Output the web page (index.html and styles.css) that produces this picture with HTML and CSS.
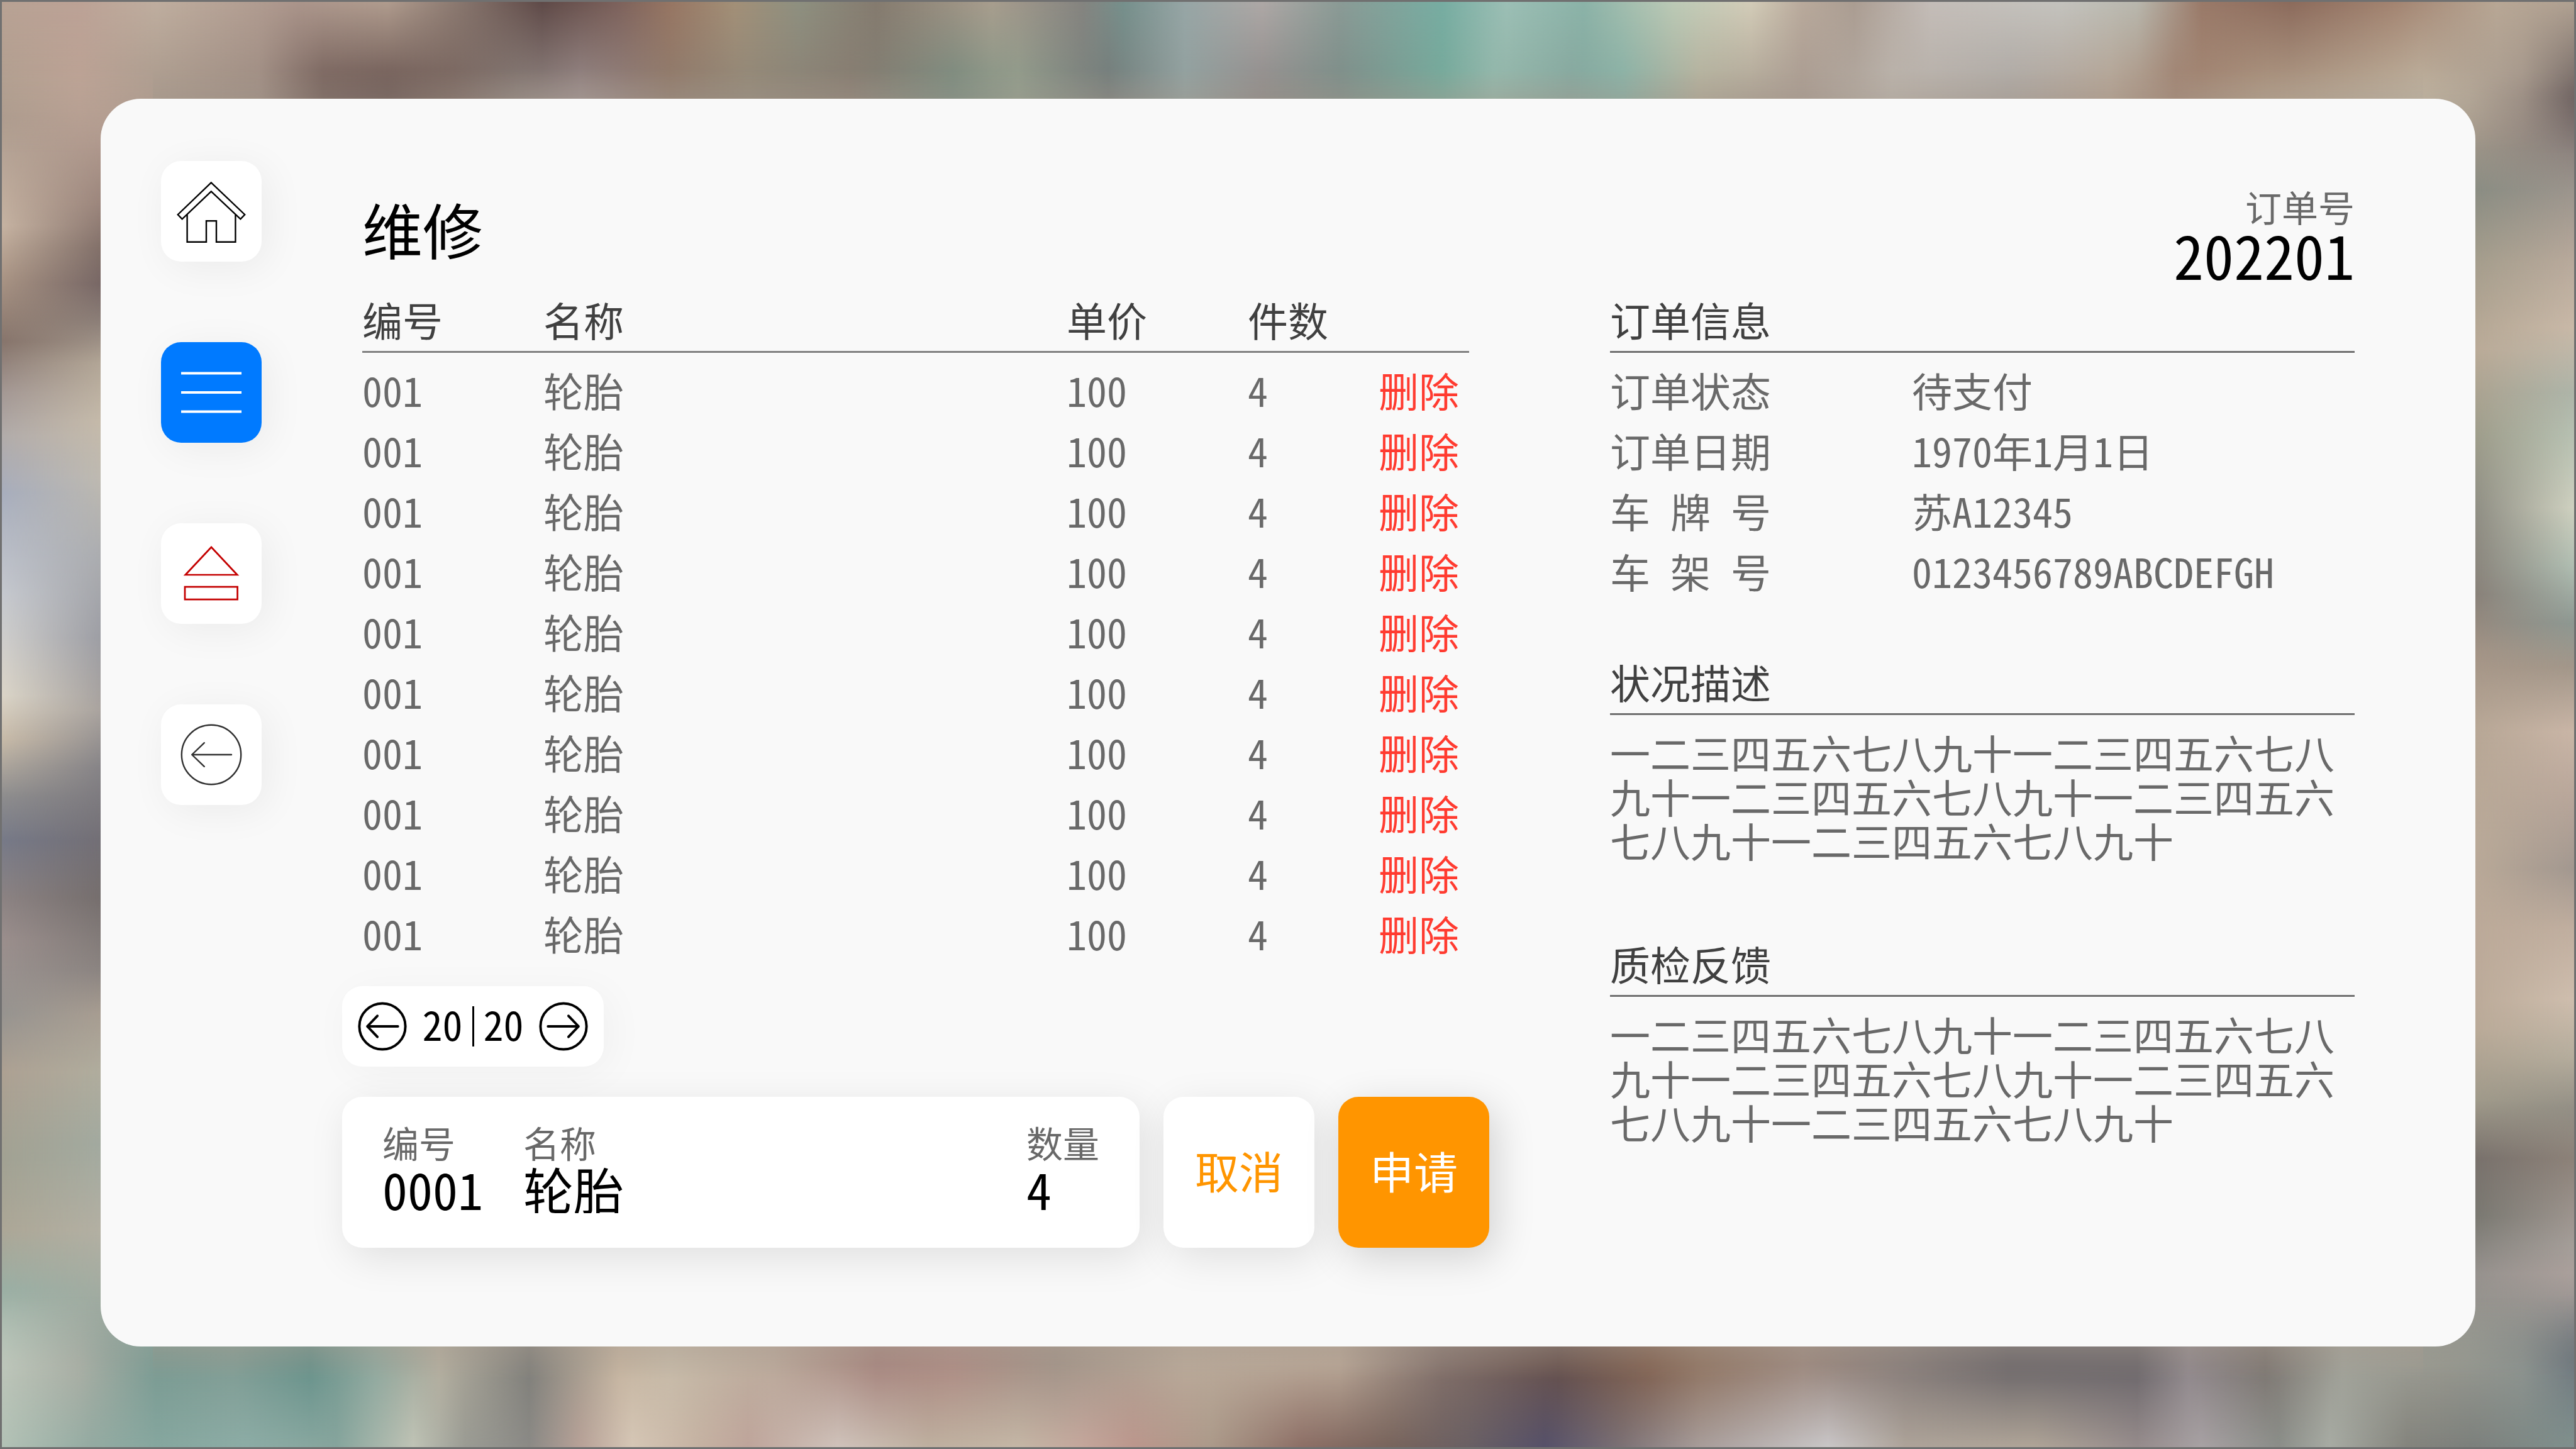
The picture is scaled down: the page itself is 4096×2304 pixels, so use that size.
FILE: index.html
```html
<!DOCTYPE html>
<html lang="zh-CN">
<head>
<meta charset="utf-8">
<title>维修</title>
<link rel="stylesheet" href="styles.css">
</head>
<body>
<div class="page">
  <div class="backdrop" aria-hidden="true">
    <div class="strip strip-left"></div>
    <div class="strip strip-right"></div>
    <div class="strip strip-top"></div>
    <div class="strip strip-bottom"></div>
  </div>

  <div class="panel">
    <nav class="nav" aria-label="导航">
      <a class="nav-item" href="#home" aria-label="首页">
        <svg viewBox="0 0 200 200"><path d="M99.700 43 L33.500 106.500 L42 115.500 L99.700 60.500 L158 115.500 L166.500 106.500 Z M52 106.500 V161 H90 V119 H110 V161 H148 V106.500"/></svg>
      </a>
      <a class="nav-item nav-item-active" href="#list" aria-label="列表">
        <svg viewBox="0 0 200 200"><path d="M40 62 H160 M40 100 H160 M40 138 H160"/></svg>
      </a>
      <a class="nav-item nav-item-eject" href="#eject" aria-label="弹出">
        <svg viewBox="0 0 200 200"><path d="M100 47.500 L48.500 102.500 H151.500 Z M47.500 126.500 H152 V151.500 H47.500 Z"/></svg>
      </a>
      <a class="nav-item nav-item-back" href="#back" aria-label="返回">
        <svg viewBox="0 0 200 200"><circle cx="100" cy="100" r="59"/><path d="M61.500 100 H140 M86 76.500 L61.500 100 L86 123.500"/></svg>
      </a>
    </nav>

    <main class="main">
      <h1 class="title">维修</h1>
      <table class="parts">
        <colgroup><col class="col-id"><col><col class="col-price"><col class="col-count"><col class="col-action"></colgroup>
        <thead>
          <tr><th>编号</th><th>名称</th><th>单价</th><th>件数</th><td></td></tr>
        </thead>
        <tbody>
          <tr><td>001</td><td>轮胎</td><td>100</td><td>4</td><td><button class="delete" type="button">删除</button></td></tr>
          <tr><td>001</td><td>轮胎</td><td>100</td><td>4</td><td><button class="delete" type="button">删除</button></td></tr>
          <tr><td>001</td><td>轮胎</td><td>100</td><td>4</td><td><button class="delete" type="button">删除</button></td></tr>
          <tr><td>001</td><td>轮胎</td><td>100</td><td>4</td><td><button class="delete" type="button">删除</button></td></tr>
          <tr><td>001</td><td>轮胎</td><td>100</td><td>4</td><td><button class="delete" type="button">删除</button></td></tr>
          <tr><td>001</td><td>轮胎</td><td>100</td><td>4</td><td><button class="delete" type="button">删除</button></td></tr>
          <tr><td>001</td><td>轮胎</td><td>100</td><td>4</td><td><button class="delete" type="button">删除</button></td></tr>
          <tr><td>001</td><td>轮胎</td><td>100</td><td>4</td><td><button class="delete" type="button">删除</button></td></tr>
          <tr><td>001</td><td>轮胎</td><td>100</td><td>4</td><td><button class="delete" type="button">删除</button></td></tr>
          <tr><td>001</td><td>轮胎</td><td>100</td><td>4</td><td><button class="delete" type="button">删除</button></td></tr>
        </tbody>
      </table>

      <div class="pager">
        <button class="pager-button" type="button" aria-label="上一页">
          <svg viewBox="0 0 98 98"><circle cx="49" cy="49" r="46"/><path d="M19 49 H80 M39 28 L19 49 L39 70"/></svg>
        </button>
        <span class="pager-pages"><span class="pager-number">20</span><span class="pager-bar"></span><span class="pager-number">20</span></span>
        <button class="pager-button" type="button" aria-label="下一页">
          <svg viewBox="0 0 98 98"><circle cx="49" cy="49" r="46"/><path d="M18 49 H79 M59 28 L79 49 L59 70"/></svg>
        </button>
      </div>

      <form class="entry">
        <div class="card">
          <div class="field field-id"><label for="part-id">编号</label><input id="part-id" type="text" value="0001"></div>
          <div class="field field-name"><label for="part-name">名称</label><input id="part-name" type="text" value="轮胎"></div>
          <div class="field field-count"><label for="part-count">数量</label><input id="part-count" type="text" value="4"></div>
        </div>
        <button class="action action-cancel" type="button">取消</button>
        <button class="action action-apply" type="button">申请</button>
      </form>
    </main>

    <aside class="side">
      <div class="order">
        <span class="order-label">订单号</span>
        <strong class="order-number">202201</strong>
      </div>
      <section class="block">
        <h2>订单信息</h2>
        <dl class="info">
          <dt>订单状态</dt><dd>待支付</dd>
          <dt>订单日期</dt><dd>1970年1月1日</dd>
          <dt>车 牌 号</dt><dd>苏A12345</dd>
          <dt>车 架 号</dt><dd>0123456789ABCDEFGH</dd>
        </dl>
      </section>
      <section class="block block-status">
        <h2>状况描述</h2>
        <p>一二三四五六七八九十一二三四五六七八九十一二三四五六七八九十一二三四五六七八九十一二三四五六七八九十</p>
      </section>
      <section class="block block-check">
        <h2>质检反馈</h2>
        <p>一二三四五六七八九十一二三四五六七八九十一二三四五六七八九十一二三四五六七八九十一二三四五六七八九十</p>
      </section>
    </aside>
  </div>
</div>
</body>
</html>
```
FILE: styles.css
```css
* { box-sizing: border-box; }

body {
  margin: 0;
  font-family: "Noto Sans CJK SC", sans-serif;
  font-feature-settings: "hwid";
  font-size: 64px;
  line-height: 96px;
  color: #696969;
}

h1, h2, p, dl, dd { margin: 0; font-weight: 400; }

button, input {
  margin: 0;
  padding: 0;
  border: 0;
  background: none;
  font: inherit;
  font-feature-settings: inherit;
  color: inherit;
}

svg { display: block; width: 100%; fill: none; stroke: currentColor; }

.page {
  position: relative;
  min-height: 100vh;
  padding: 154px 157px 160px;
  border: 3px solid #707070;
}

/* Blurred photo backdrop, visible round the panel */
.backdrop { position: absolute; inset: 0; overflow: hidden; background: #a89c90; }
.strip { position: absolute; }
.strip::after { content: ""; position: absolute; inset: 0; }

.strip-left, .strip-right { top: 0; bottom: 0; width: 240px; }
.strip-left {
  left: 0;
  background: linear-gradient(#c0b0a0, #b5a596 4%, #ae9c8f 8%, #c6b3a2 15.5%, #ab9686 19%, #87756c 23.5%, #a49894 27%, #b2acaa 30%, #a8aebd 34%, #c6c9cf 41%, #dbd5c8 48%, #c8bba9 51%, #8e8d8e 55%, #777a88 58%, #8c8383 62%, #9b8f8d 65%, #979490 70%, #ada193 74%, #a2a293 80%, #aca797 85%, #9bafa4 89%, #b0c2b6 93%, #d2d9cf 96.5%, #a0b5aa);
}
.strip-left::after {
  background: linear-gradient(#bda99d, #bda79a 5%, #ae978c 10%, #988279 14%, #7e6c66 17%, #746463 19.5%, #8a7d77 22%, #b4a898 25%, #c6bbaa 29%, #bfbab0 33%, #abacae 38%, #999aa1 44%, #a6a09c 49%, #838185 53%, #726e74 58%, #746d6c 62%, #8a8380 67%, #a89d91 70%, #b0ad9e 74%, #a2aaa0 79%, #b3b0a3 85%, #9faaa0 90%, #93a29a 94%, #88a89f);
  mask-image: linear-gradient(to right, transparent, #000 70%);
}
.strip-right {
  right: 0;
  background: linear-gradient(#b0a599, #8f847d 3%, #736564 6%, #867b78 9%, #9c958d 13%, #b9aa9c 18%, #c9b9a8 22.5%, #aeb5a9 27%, #b7c1b2 30%, #cfd1c0 35%, #b0beb2 39%, #8e9892 43%, #a3978a 46%, #cab6a7 50.5%, #b9a79b 55%, #a39890 60%, #c0ae9f 64%, #cfbeae 69%, #b5ad9d 73%, #949086 76.5%, #8d8279 80%, #a59e99 86%, #aba09c 88%, #95918f 91%, #74777a 94%, #7a8280 97%, #707876);
}
.strip-right::after {
  background: linear-gradient(#b29c8c, #bbac9a 5%, #a3988a 9%, #898c82 13%, #a39c8b 18%, #b9a996 24%, #9c9a88 30%, #8b8a80 35%, #877e76 41%, #a39385 45%, #b5a594 50%, #baaa98 58%, #bba998 65%, #b9a997 71%, #a09a8a 76%, #77706b 80%, #77766f 84%, #94908c 88%, #989a91 94%, #7f8b88);
  mask-image: linear-gradient(to left, transparent, #000 70%);
}

.strip-top, .strip-bottom { left: 0; right: 0; height: 240px; }
.strip-top {
  top: 0;
  background: linear-gradient(to right, #b8a294, #bca296 3%, #bfae9f 6%, #ab958b 11.5%, #b09c8e 15%, #86746c 18%, #5f4a48 21%, #7d625c 24%, #977663 26%, #a39078 28.5%, #8e9080 31%, #857b6f 34%, #a89e8e 38.5%, #858480 42%, #76908c 43.6%, #97a6a6 46%, #aea8a6 49%, #8b9b96 52%, #77ada2 56%, #9cbfb5 58.5%, #8bb3a8 61.5%, #bccab6 65%, #d3ccb8 68%, #b9aa9c 70%, #ab9d92 72%, #c4bdb8 75%, #c4c3be 80%, #b9b8ae 83%, #9a7a69 85.5%, #8c6b5c 89%, #a38471 93%, #b8a795 97%, #b0a192);
  mask-image: linear-gradient(#000 45%, transparent);
}
.strip-top::after {
  background: linear-gradient(to right, #b09e8f, #bba294 3%, #a8988b 6%, #9c8b81 10%, #6c5853 12.5%, #624e4b 15%, #75625c 17.5%, #8a7f7a 20%, #9c8f8e 22.5%, #93817a 24.5%, #8f7c6e 26%, #908677 29%, #877c71 33%, #758a7e 37%, #8d9c8b 39.5%, #747b79 43%, #919f9d 46%, #8b8887 49%, #7b8b86 52%, #77a899 56%, #92b5a8 58%, #86a59c 61%, #85aea3 63%, #b0aa97 66%, #a89a90 70%, #bab3ab 73.5%, #aaa49f 78%, #b29f8f 82%, #a08270 84.5%, #b09b86 88%, #c0b5a2 94%, #a2958a 98%, #6f6462);
  mask-image: linear-gradient(transparent, #000 65%);
}
.strip-bottom {
  bottom: 0;
  background: linear-gradient(to right, #b3c2b6, #94aba2 3.5%, #86a79f 6%, #8dada6 9.5%, #86a59d 13%, #c0c4b6 16%, #9b9c94 18%, #8b8a86 20.5%, #b8a298 22.5%, #d6c7b6 24.5%, #c6b3a3 27%, #bfa59b 29%, #d0c3bb 32.5%, #bfb0a0 36%, #c5b7a6 39.5%, #c5a79c 42%, #bc978d 44%, #ac9a8a 47%, #8d6f66 50.5%, #78645c 54%, #6a6064 57%, #56516a 60%, #7d7276 63%, #a89d9a 66%, #cac7c8 71%, #aea49a 74%, #b0a598 79%, #968c8c 83%, #a8a2a4 85.5%, #8b8e89 88.5%, #a8aca4 90.5%, #84847d 93.5%, #7c807c 96%, #80918e);
  mask-image: linear-gradient(transparent, #000 55%);
}
.strip-bottom::after {
  background: linear-gradient(to right, #bcc4b8, #aaaea4 3%, #7a9a92 6%, #809c94 9%, #67918a 12%, #8fa89e 14.5%, #b3ae9f 17%, #807f7a 20.5%, #c5b4a0 24%, #c6baa8 26%, #bba99b 30%, #a6857e 34%, #ac8b83 37%, #a29388 41%, #b9a999 46%, #b7a595 52%, #82706a 56%, #66504b 60.5%, #80604f 64%, #8f7361 66%, #9b877d 70%, #857b78 74%, #6a6568 78%, #6a6569 83%, #8e868a 85%, #7c7570 88%, #a0a198 91%, #97978e 95%, #8d938f 98%, #707a80);
  mask-image: linear-gradient(#000 45%, transparent);
}

.panel {
  position: relative;
  display: grid;
  grid-template-columns: 160px minmax(0, 1952fr) minmax(0, 1376fr);
  padding: 99px 192px 157px 96px;
  border-radius: 64px;
  background: #f9f9f9;
}

.nav { display: flex; flex-direction: column; gap: 128px; }
.nav-item {
  display: block;
  height: 160px;
  border-radius: 32px;
  background: #fff;
  color: #000;
  stroke-width: 3;
  box-shadow: 10px 10px 64px rgba(0, 0, 0, .06);
}
.nav-item-active { background: #007aff; color: #fff; stroke-width: 5; }
.nav-item-eject { color: #c40000; stroke-width: 3.4; }
.nav-item-back { color: #303030; stroke-width: 3; stroke-linecap: round; stroke-linejoin: round; }

.main { margin-left: 128px; }
.title {
  padding: 35px 32px 28px;
  font-size: 96px;
  line-height: 144px;
  color: #000;
}

.parts {
  width: calc(100% - 64px);
  margin: 0 32px;
  border-collapse: separate;
  border-spacing: 0;
  table-layout: fixed;
}
.parts th, .parts td { height: 96px; padding: 0; text-align: left; font-weight: 400; }
.parts thead th, .parts thead td {
  height: 98px;
  padding-bottom: 7px;
  border-bottom: 3px solid #808080;
  line-height: 88px;
  color: #404040;
}
.parts tbody::before { content: ""; display: block; height: 10px; }
.col-id, .col-price { width: 288px; }
.col-count { width: 208px; }
.col-action { width: 144px; }
.delete { display: block; line-height: 96px; color: #ff3b30; }

.pager {
  display: flex;
  align-items: center;
  justify-content: space-between;
  width: 416px;
  height: 128px;
  margin-top: 37px;
  padding: 0 25px;
  border-radius: 32px;
  background: #fff;
  color: #000;
  box-shadow: 10px 10px 64px rgba(0, 0, 0, .04);
}
.pager-button { width: 78px; stroke-width: 5; stroke-linecap: round; stroke-linejoin: round; }
.pager-pages { display: flex; align-items: center; gap: 15px; }
.pager-number { padding-bottom: 10px; }
.pager-bar { width: 3px; height: 64px; background: #000; }

.entry { display: flex; gap: 38px; margin-top: 48px; }
.card {
  flex: 1;
  display: flex;
  min-width: 0;
  height: 240px;
  padding: 39px 32px 24px 64px;
  border-radius: 32px;
  background: #fff;
  box-shadow: 10px 16px 64px rgba(0, 0, 0, .1);
}
.field { display: flex; flex-direction: column; }
.field label { font-size: 58px; line-height: 66px; }
.field input { width: 100%; height: 80px; font-size: 80px; line-height: 80px; color: #000; }
.field-id { width: 224px; }
.field-name { flex: 1; }
.field-count { width: 148px; }

.action {
  width: 240px;
  height: 240px;
  padding-bottom: 6px;
  border-radius: 32px;
  font-size: 70px;
  box-shadow: 10px 16px 64px rgba(0, 0, 0, .1);
}
.action-cancel { background: #fff; color: #ff9500; }
.action-apply { background: #ff9500; color: #fff; box-shadow: 10px 16px 64px rgba(0, 0, 0, .16); }

.side { margin-left: 192px; }
.order {
  display: flex;
  flex-direction: column;
  align-items: flex-end;
  padding: 36px 0 19px;
}
.order-label { font-size: 58px; line-height: 72px; }
.order-number { font-size: 96px; line-height: 80px; font-weight: 400; color: #000; }

.block h2 {
  height: 98px;
  border-bottom: 3px solid #707070;
  font-size: 64px;
  line-height: 88px;
  color: #404040;
}
.info {
  display: grid;
  grid-template-columns: 480px 1fr;
  padding-top: 10px;
}
.block p { padding-top: 23px; line-height: 70px; word-break: break-all; }
.block-status { margin-top: 84px; }
.block-check { margin-top: 117px; }
```
